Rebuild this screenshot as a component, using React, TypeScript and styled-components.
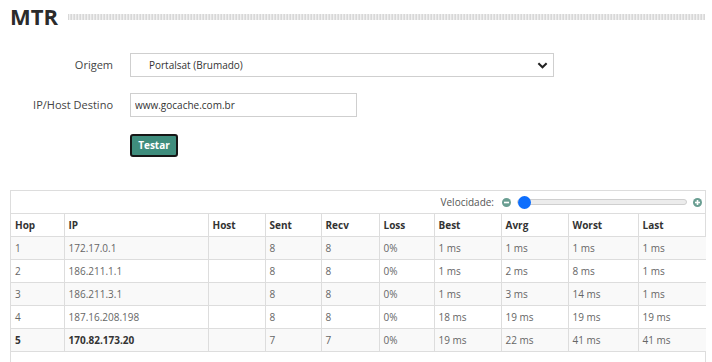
import React from "react";
import styled, { createGlobalStyle } from "styled-components";

const GlobalStyle = createGlobalStyle`
  html, body { margin: 0; padding: 0; background: #fff; }
  body { font-family: "Open Sans", "Liberation Sans", sans-serif; color: #333; }
  * { box-sizing: border-box; }
`;

const Page = styled.div`
  padding: 1px 7px 0 10px;
  width: 712px;
`;

const TitleRow = styled.div`
  display: flex;
  align-items: center;
  gap: 10px;
  height: 30px;
`;

const Title = styled.h1`
  margin: 0;
  font-size: 22px;
  line-height: 30px;
  font-weight: 700;
  color: #2b2b2b;
`;

const Stripe = styled.div`
  flex: 1;
  height: 6px;
  margin-top: 2px;
  background: repeating-linear-gradient(
    90deg,
    #d8d8d8 0 1px,
    #f1f1f1 1px 2px,
    #e2e2e2 2px 3px
  );
`;

const Form = styled.form`
  display: grid;
  grid-template-columns: 120px auto;
  grid-template-rows: 24px 24px 23px;
  align-items: center;
  row-gap: 16px;
  margin-top: 22px;
`;

const Label = styled.label`
  text-align: right;
  padding-right: 17px;
  font-size: 11px;
  line-height: 14px;
  color: #444;
`;

const SelectWrap = styled.div`
  position: relative;
  width: 424px;
  height: 24px;
`;

const Select = styled.select`
  appearance: none;
  display: block;
  width: 100%;
  height: 24px;
  border: 1px solid #cfcfcf;
  border-radius: 0;
  background: #fff;
  padding: 0 0 0 18px;
  font-family: inherit;
  font-size: 10px;
  color: #333;
`;

const Chevron = styled.svg`
  position: absolute;
  right: 6px;
  top: 8px;
  pointer-events: none;
`;

const Input = styled.input`
  display: block;
  width: 227px;
  height: 24px;
  border: 1px solid #cfcfcf;
  padding: 0 4px;
  font-family: inherit;
  font-size: 10px;
  color: #333;
`;

const ButtonCell = styled.div`
  grid-column: 2;
  height: 23px;
  margin-top: 1px;
`;

const Button = styled.button`
  display: block;
  width: 48px;
  height: 23px;
  background: #3f8d7d;
  color: #fff;
  border: 2px solid #161616;
  border-radius: 3px;
  font-family: inherit;
  font-size: 10px;
  font-weight: 700;
  padding: 0;
  line-height: 1;
`;

const Panel = styled.div`
  margin-top: 34px;
  border: 1px solid #ddd;
  border-bottom: none;
  width: 696px;
  padding-bottom: 20px;
`;

const Toolbar = styled.div`
  height: 22px;
  display: flex;
  align-items: center;
  justify-content: flex-end;
  gap: 6px;
  padding-right: 3px;
  font-size: 10px;
  color: #555;
`;

const ToolLabel = styled.span`
  margin-right: 2px;
`;

const RoundIcon = styled.svg`
  flex: none;
`;

const Range = styled.input`
  appearance: none;
  -webkit-appearance: none;
  width: 170px;
  height: 13px;
  margin: 0;
  background: transparent;
  &::-webkit-slider-runnable-track {
    height: 6px;
    background: #ececec;
    border: 1px solid #cfcfcf;
    border-radius: 3px;
  }
  &::-webkit-slider-thumb {
    -webkit-appearance: none;
    width: 13px;
    height: 13px;
    border-radius: 50%;
    background: #0d6efd;
    margin-top: -4.5px;
    border: none;
  }
`;

const Table = styled.table`
  width: 695px;
  border-collapse: collapse;
  table-layout: fixed;
  font-size: 10px;
`;

const Th = styled.th`
  height: 23px;
  border: 1px solid #ddd;
  padding: 0 4px;
  text-align: left;
  font-weight: 700;
  color: #333;
  &:first-child { border-left: none; }
  &:last-child { border-right: none; }
`;

const Tr = styled.tr<{ $striped: boolean }>`
  background: ${(p) => (p.$striped ? "#f9f9f9" : "#fff")};
`;

const Td = styled.td<{ $strong?: boolean }>`
  height: 23px;
  border: 1px solid #ddd;
  padding: 0 4px;
  color: ${(p) => (p.$strong ? "#333" : "#666")};
  font-weight: ${(p) => (p.$strong ? 700 : 400)};
  &:first-child { border-left: none; }
  &:last-child { border-right: none; }
`;

const widths = [53, 144, 57, 56, 58, 55, 67, 67, 70, 68];
const headers = ["Hop", "IP", "Host", "Sent", "Recv", "Loss", "Best", "Avrg", "Worst", "Last"];
const rows = [
  ["1", "172.17.0.1", "", "8", "8", "0%", "1 ms", "1 ms", "1 ms", "1 ms"],
  ["2", "186.211.1.1", "", "8", "8", "0%", "1 ms", "2 ms", "8 ms", "1 ms"],
  ["3", "186.211.3.1", "", "8", "8", "0%", "1 ms", "3 ms", "14 ms", "1 ms"],
  ["4", "187.16.208.198", "", "8", "8", "0%", "18 ms", "19 ms", "19 ms", "19 ms"],
  ["5", "170.82.173.20", "", "7", "7", "0%", "19 ms", "22 ms", "41 ms", "41 ms"],
];

const CircleIcon = ({ plus }: { plus?: boolean }) => (
  <RoundIcon width="9" height="9" viewBox="0 0 10 10">
    <circle cx="5" cy="5" r="5" fill="#6a9e92" />
    <rect x="2.2" y="4.1" width="5.6" height="1.8" fill="#fff" />
    {plus && <rect x="4.1" y="2.2" width="1.8" height="5.6" fill="#fff" />}
  </RoundIcon>
);

export default function App() {
  return (
    <Page>
      <GlobalStyle />
      <TitleRow>
        <Title>MTR</Title>
        <Stripe />
      </TitleRow>
      <Form onSubmit={(e) => e.preventDefault()}>
        <Label htmlFor="origem">Origem</Label>
        <SelectWrap>
          <Select id="origem" defaultValue="brumado">
            <option value="brumado">Portalsat (Brumado)</option>
          </Select>
          <Chevron width="11" height="9" viewBox="0 0 12 9">
            <path d="M1.5 2 L6 6.5 L10.5 2" fill="none" stroke="#222" strokeWidth="2.2" />
          </Chevron>
        </SelectWrap>
        <Label htmlFor="destino">IP/Host Destino</Label>
        <div>
          <Input id="destino" defaultValue="www.gocache.com.br" />
        </div>
        <ButtonCell>
          <Button type="submit">Testar</Button>
        </ButtonCell>
      </Form>
      <Panel>
        <Toolbar>
          <ToolLabel>Velocidade:</ToolLabel>
          <CircleIcon />
          <Range type="range" min={0} max={100} defaultValue={0} />
          <CircleIcon plus />
        </Toolbar>
        <Table>
          <colgroup>
            {widths.map((w, i) => (
              <col key={i} style={{ width: w }} />
            ))}
          </colgroup>
          <thead>
            <tr>
              {headers.map((h) => (
                <Th key={h}>{h}</Th>
              ))}
            </tr>
          </thead>
          <tbody>
            {rows.map((r, i) => (
              <Tr key={i} $striped={i % 2 === 0}>
                {r.map((c, j) => (
                  <Td key={j} $strong={i === rows.length - 1 && j < 2}>
                    {c}
                  </Td>
                ))}
              </Tr>
            ))}
          </tbody>
        </Table>
      </Panel>
    </Page>
  );
}
